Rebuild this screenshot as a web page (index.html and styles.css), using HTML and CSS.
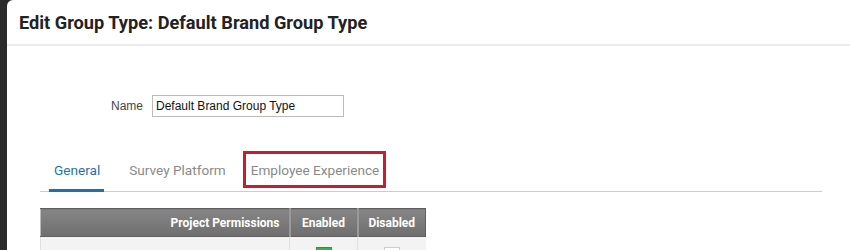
FILE: index.html
```html
<!DOCTYPE html>
<html lang="en">
<head>
    <meta charset="UTF-8">
    <meta name="viewport" content="width=device-width, initial-scale=1.0">
    <title>Edit Group Type</title>
    <link rel="stylesheet" href="styles.css">
</head>
<body>
    <div class="modal">
        <div class="modal-header">
            <h1>Edit Group Type: Default Brand Group Type</h1>
        </div>

        <div class="modal-body">
            <div class="name-row">
                <label for="group-name">Name</label>
                <input type="text" id="group-name" value="Default Brand Group Type">
            </div>

            <div class="tabs">
                <div class="tab active">General</div>
                <div class="tab">Survey Platform</div>
                <div class="tab highlighted">Employee Experience</div>
            </div>

            <table class="permissions">
                <tr>
                    <th class="col-name">Project Permissions</th>
                    <th class="col-check">Enabled</th>
                    <th class="col-check">Disabled</th>
                </tr>
                <tr>
                    <td></td>
                    <td><span class="check on"></span></td>
                    <td><span class="check"></span></td>
                </tr>
            </table>
        </div>
    </div>
</body>
</html>
```

FILE: styles.css
```css
body {
    margin: 0;
    padding: 0;
    background-color: #2b2b2b;
    font-family: Roboto, Arial, sans-serif;
    height: 250px;
    overflow: hidden;
}

.modal {
    margin-left: 7px;
    height: 100vh;
    overflow: hidden;
    background-color: #fff;
    border-top-left-radius: 6px;
}

.modal-header {
    height: 44px;
    padding-left: 12px;
    display: flex;
    align-items: center;
    border-bottom: 2px solid #ececec;
}

.modal-header h1 {
    margin: 0;
    font-size: 18.2px;
    font-weight: 700;
    color: #222;
}

.modal-body {
    padding-left: 33px;
}

.name-row {
    display: flex;
    align-items: center;
    gap: 9px;
    margin-top: 49px;
    margin-left: 71px;
    font-family: "Liberation Sans", Arial, sans-serif;
}

.name-row label {
    font-size: 12px;
    color: #444;
}

.name-row input {
    width: 184px;
    height: 16px;
    padding: 2px 3px;
    border: 1px solid #bbb;
    font-family: "Liberation Sans", Arial, sans-serif;
    font-size: 12px;
    color: #111;
}

.tabs {
    display: flex;
    align-items: flex-end;
    width: 782px;
    height: 40px;
    margin-top: 34px;
    border-bottom: 1px solid #ccc;
}

.tab {
    font-size: 13.6px;
    line-height: 16px;
    color: #8a8a8a;
    padding-bottom: 13px;
}

.tab.active {
    color: #1f6fb5;
    margin-left: 9px;
    margin-right: 25px;
    margin-bottom: -1px;
    padding: 0 4px 11px 5px;
    border-bottom: 3px solid #1f6fb5;
}

.tab.highlighted {
    margin-left: 17px;
    margin-bottom: 3px;
    padding: 8px 4px 7px 5px;
    border: 3px solid #c21f32;
}

.permissions {
    border-collapse: collapse;
    table-layout: fixed;
    margin-top: 16px;
    width: 386px;
}

.permissions th {
    box-sizing: border-box;
    height: 28px;
    padding: 0 9px;
    background: linear-gradient(#868686, #6e6e6e);
    color: #fff;
    font-size: 12px;
    font-weight: 700;
    border: 1px solid #5e5e5e;
    border-left: 2px solid #9a9a9a;
}

.permissions th.col-name {
    width: 249px;
    text-align: right;
    border-left: 1px solid #bbb;
}

.permissions th.col-check {
    width: 68px;
    padding: 0;
    text-align: center;
}

.permissions td {
    height: 30px;
    background-color: #f3f3f3;
    border-left: 1px solid #e0e0e0;
    vertical-align: top;
    text-align: center;
    padding-top: 10px;
}

.check {
    display: inline-block;
    width: 14px;
    height: 14px;
    border: 1px solid #ccc;
    background-color: #fff;
}

.check.on {
    background-color: #2db84a;
    border-color: #1e9a37;
}
```
